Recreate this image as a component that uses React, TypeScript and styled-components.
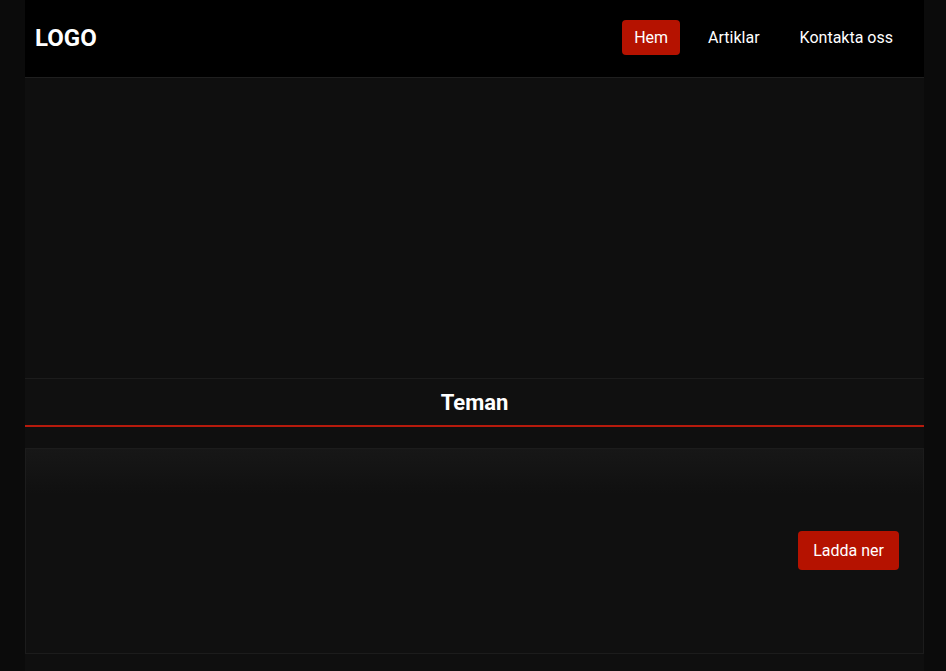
import styled, { createGlobalStyle } from "styled-components";

const GlobalStyle = createGlobalStyle`
  html, body {
    margin: 0;
    padding: 0;
    background: #0b0b0b;
    font-family: Roboto, "Liberation Sans", sans-serif;
    color: #fff;
  }
`;

const Page = styled.div`
  width: 899px;
  margin-left: 25px;
  min-height: 671px;
  background: #0f0f0f;
  display: flex;
  flex-direction: column;
`;

const Header = styled.header`
  height: 78px;
  box-sizing: border-box;
  background: #000;
  border-bottom: 1px solid #1f1f1f;
  display: flex;
  align-items: center;
  justify-content: space-between;
  padding: 0 10px 2px;
`;

const Logo = styled.div`
  font-size: 24px;
  font-weight: 700;
  color: #fff;
`;

const Nav = styled.nav`
  display: flex;
  align-items: center;
  gap: 4px;
  margin-right: 3px;
`;

const NavLink = styled.a<{ $active?: boolean }>`
  font-size: 16px;
  color: #fff;
  text-decoration: none;
  padding: 8px 12px;
  margin: 0 6px;
  border-radius: 4px;
  line-height: 19px;
  background: ${(p) => (p.$active ? "#b51200" : "transparent")};
`;

const Hero = styled.section`
  height: 300px;
`;

const SectionTitle = styled.h2`
  margin: 0;
  height: 46px;
  display: flex;
  align-items: center;
  justify-content: center;
  font-size: 22px;
  font-weight: 700;
  background: #101010;
  border-top: 1px solid #1c1c1c;
  border-bottom: 2px solid #b71a0c;
`;

const Card = styled.div`
  margin-top: 21px;
  height: 204px;
  border: 1px solid #1c1c1c;
  background: linear-gradient(#171717, #101010 45px);
  display: flex;
  align-items: center;
  justify-content: flex-end;
  padding: 0 24px;
`;

const Button = styled.button`
  font-family: inherit;
  font-size: 16px;
  color: #fff;
  background: #b51200;
  border: none;
  border-radius: 4px;
  padding: 10px 15px;
  line-height: 19px;
  margin-bottom: 1px;
`;

export default function App() {
  return (
    <>
      <GlobalStyle />
      <Page>
        <Header>
          <Logo>LOGO</Logo>
          <Nav>
            <NavLink $active>Hem</NavLink>
            <NavLink>Artiklar</NavLink>
            <NavLink>Kontakta oss</NavLink>
          </Nav>
        </Header>
        <Hero />
        <SectionTitle>Teman</SectionTitle>
        <Card>
          <Button>Ladda ner</Button>
        </Card>
      </Page>
    </>
  );
}
